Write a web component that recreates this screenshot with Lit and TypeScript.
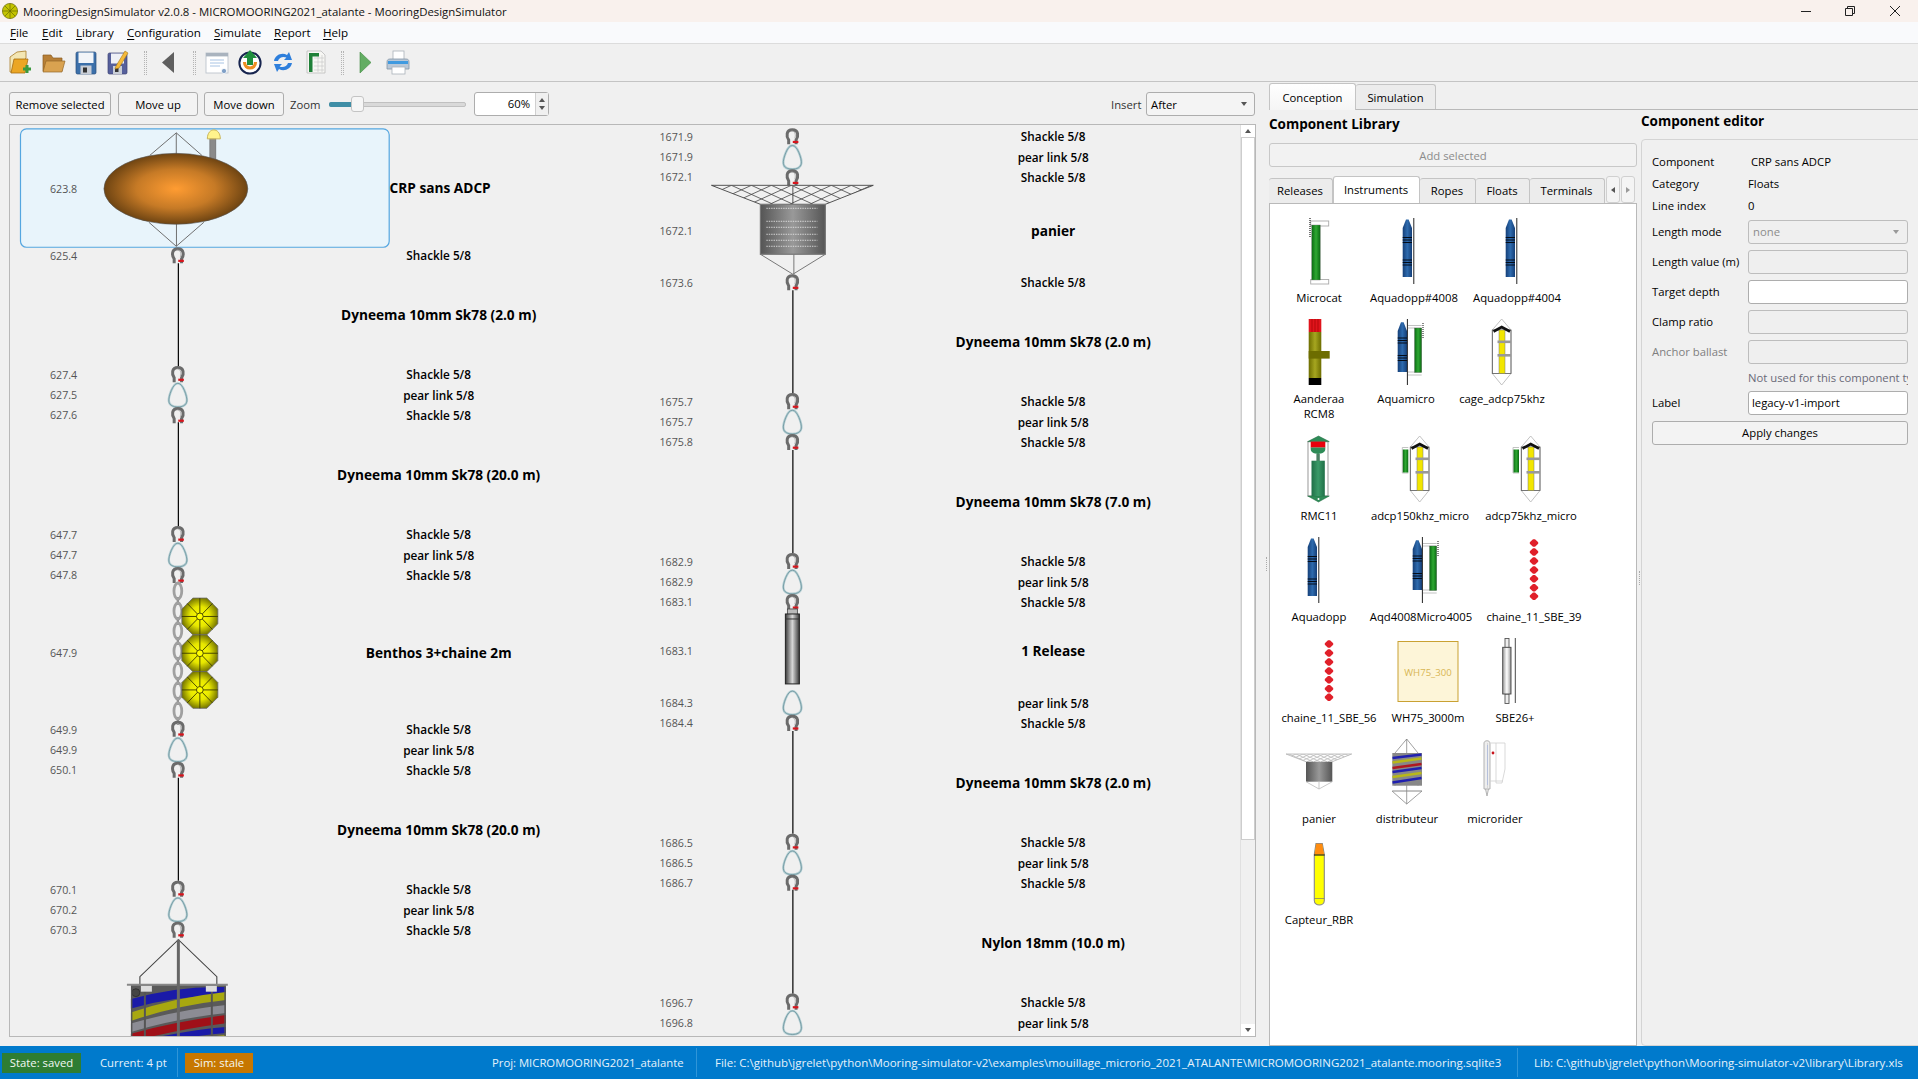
import { LitElement, html, css, svg } from 'lit';
import { customElement } from 'lit/decorators.js';

// --- mooring line parts, drawn around a centre point ---
const shackle = (x: number, y: number) => svg`
  <g transform="translate(${x} ${y})">
    <path d="M-3.7 8V3.6C-6.2 .2-6.4-6.6 0-6.6S6.2 .2 3.7 3.6V8" fill="none" stroke="#6b6b6b" stroke-width="3"/>
    <path d="M-1 -5.4C3-5.4 3.6-1 2.4 2" fill="none" stroke="#9a9a9a" stroke-width=".7"/>
    <path d="M.4 5.6H6" stroke="#d8141c" stroke-width="2.2"/>
  </g>`;

const pear = (x: number, y: number) => svg`
  <g transform="translate(${x} ${y})">
    <path d="M0-11.8C5-12.4 9.6 2 9 6 8.4 10.4 4.4 11.8 0 11.8S-8.6 10.4-9 6C-9.6 2-5-12.4 0-11.8Z" fill="none" stroke="#b4ced3" stroke-width="2.4"/>
    <path d="M0-11.8C5-12.4 9.6 2 9 6 8.4 10.4 4.4 11.8 0 11.8S-8.6 10.4-9 6C-9.6 2-5-12.4 0-11.8Z" fill="none" stroke="#5e8a94" stroke-width=".7"/>
  </g>`;

const float = (cx: number, cy: number) => svg`
  <g transform="translate(${cx} ${cy})">
    <path d="M-7-18.4H7L18-7.4V7.4L7 18.4H-7L-18 7.4V-7.4Z" fill="url(#fl)" stroke="#666" stroke-width=".8"/>
    <path d="M0-18.4V18.4M-18 0H18M-12.6-13-0 0 12.6 13M12.6-13 0 0-12.6 13" stroke="#3c3c00" stroke-width=".9"/>
    <circle r="3.4" fill="#ffff00" stroke="#3c3c00" stroke-width=".9"/>
  </g>`;

const chain = (x: number, y0: number, n: number) => {
  const out = [];
  for (let i = 0; i < n; i++) {
    const y = y0 + i * 20;
    out.push(svg`<rect x=${x - 1.2} y=${y + 6} width="2.4" height="8" fill="#8e8e8e"/>`);
    out.push(svg`<ellipse cx=${x} cy=${y} rx="3.9" ry="8" fill="none" stroke="#a0a0a0" stroke-width="2.8"/>`);
  }
  return out;
};

const rope = (x: number, a: number, b: number) =>
  svg`<line x1=${x + 0.5} x2=${x + 0.5} y1=${a} y2=${b} stroke="#000" stroke-width="1.2"/>`;

const dep = (x: number, y: number, t: string) => svg`<text class="dep" x=${x} y=${y}>${t}</text>`;
const lbl = (x: number, y: number, t: string) => svg`<text class="lbl" x=${x} y=${y}>${t}</text>`;
const big = (x: number, y: number, t: string) => svg`<text class="big" x=${x} y=${y}>${t}</text>`;

// shackle / pear link / shackle stack that joins two segments
const group = (x: number, dx: number, lx: number, s: number, d: string[]) => svg`
  ${shackle(x, s)}${pear(x, s + 21)}${d[2] ? shackle(x, s + 41) : ''}
  ${dep(dx, s + 1, d[0])}${dep(dx, s + 21, d[1])}${d[2] ? dep(dx, s + 41, d[2]) : ''}
  ${lbl(lx, s, 'Shackle 5/8')}${lbl(lx, s + 21, 'pear link 5/8')}${d[2] ? lbl(lx, s + 41, 'Shackle 5/8') : ''}`;

const net = (cid: string, x0: number, x1: number, y0: number, x2: number, x3: number, y1: number, col: string, step: number) => {
  const lines = [];
  const h = y1 - y0;
  for (let x = x0 - 60; x < x1 + 60; x += step) {
    lines.push(svg`<line x1=${x} y1=${y0} x2=${x + h * 2.2} y2=${y1} stroke=${col} stroke-width=".8"/>`);
    lines.push(svg`<line x1=${x} y1=${y0} x2=${x - h * 2.2} y2=${y1} stroke=${col} stroke-width=".8"/>`);
  }
  return svg`
    <clipPath id=${cid}><polygon points="${x0},${y0} ${x1},${y0} ${x3},${y1} ${x2},${y1}"/></clipPath>
    <g clip-path="url(#${cid})">${lines}</g>
    <polyline points="${x2},${y1} ${x0},${y0} ${x1},${y0} ${x3},${y1}" fill="none" stroke=${col} stroke-width=".9"/>`;
};

const Canvas = () => {
  const c1 = 178, d1 = 50, l1 = 439;
  const c2 = 793, d2 = 660, l2 = 1054;
  const dashes = [208, 221, 227, 234, 240, 246];
  return svg`
  <defs>
    <radialGradient id="bu"><stop offset="0" stop-color="#ff9c32"/><stop offset=".55" stop-color="#c67a26"/><stop offset="1" stop-color="#6e4412"/></radialGradient>
    <radialGradient id="fl"><stop offset="0" stop-color="#ffff00"/><stop offset=".55" stop-color="#e6e600"/><stop offset="1" stop-color="#7c7c00"/></radialGradient>
    <linearGradient id="bx"><stop offset="0" stop-color="#555"/><stop offset=".5" stop-color="#999"/><stop offset="1" stop-color="#555"/></linearGradient>
    <linearGradient id="rl"><stop offset="0" stop-color="#3a3a3a"/><stop offset=".5" stop-color="#d8d8d8"/><stop offset="1" stop-color="#3a3a3a"/></linearGradient>
    <linearGradient id="blu"><stop offset="0" stop-color="#153f78"/><stop offset=".5" stop-color="#2e6bae"/><stop offset="1" stop-color="#153f78"/></linearGradient>
    <linearGradient id="grn"><stop offset="0" stop-color="#0a6a12"/><stop offset=".5" stop-color="#2ea832"/><stop offset="1" stop-color="#0a6a12"/></linearGradient>
    <linearGradient id="oli"><stop offset="0" stop-color="#6d6d00"/><stop offset=".5" stop-color="#a6a620"/><stop offset="1" stop-color="#6d6d00"/></linearGradient>
    <linearGradient id="grs"><stop offset="0" stop-color="#999"/><stop offset=".5" stop-color="#fff"/><stop offset="1" stop-color="#999"/></linearGradient>
    <linearGradient id="sea"><stop offset="0" stop-color="#1f6f47"/><stop offset=".5" stop-color="#3a9a68"/><stop offset="1" stop-color="#1f6f47"/></linearGradient>
    <clipPath id="dc"><rect x="131" y="985" width="95" height="52"/></clipPath>
  </defs>

  <!-- buoy, selected -->
  <rect x="20.5" y="128.5" width="369" height="118.5" rx="6" fill="#e8f4fb" stroke="#54a6e0" stroke-width="1.2"/>
  <path d="M150 155 176.4 132.5 202 155M176.4 132.5V155M149 222 176.4 246 204 222M176.6 222V246" fill="none" stroke="#6f6f6f" stroke-width="1"/>
  <rect x="210" y="138" width="6" height="22" fill="#8a8a8a" stroke="#666" stroke-width=".6"/>
  <path d="M207.5 138.5C207.5 126.5 220.5 126.5 220.5 138.5Z" fill="#fff38c" stroke="#c8b45a" stroke-width="1"/>
  <ellipse cx="176" cy="188.5" rx="72" ry="35.5" fill="url(#bu)" stroke="#555" stroke-width=".6"/>
  ${dep(d1, 189, '623.8')}
  <text class="big" x="440.5" y="187">CRP sans ADCP</text>

  ${shackle(c1, 255)}${dep(d1, 256, '625.4')}${lbl(l1, 255, 'Shackle 5/8')}
  ${rope(c1, 263, 366)}
  ${big(l1, 314, 'Dyneema 10mm Sk78 (2.0 m)')}
  ${group(c1, d1, l1, 374, ['627.4', '627.5', '627.6'])}
  ${rope(c1, 422, 526)}
  ${big(l1, 474, 'Dyneema 10mm Sk78 (20.0 m)')}
  ${group(c1, d1, l1, 534, ['647.7', '647.7', '647.8'])}

  ${chain(c1, 591, 7)}
  ${float(200, 616.5)}${float(200, 653.3)}${float(200, 690)}
  ${dep(d1, 653, '647.9')}
  ${big(l1, 653, 'Benthos 3+chaine 2m')}

  ${group(c1, d1, l1, 729, ['649.9', '649.9', '650.1'])}
  ${rope(c1, 778, 881)}
  ${big(l1, 830, 'Dyneema 10mm Sk78 (20.0 m)')}
  ${group(c1, d1, l1, 889, ['670.1', '670.2', '670.3'])}

  <!-- distributeur, cut by the canvas edge -->
  <path d="M140 985V977L178.5 940 217 977V985" fill="none" stroke="#444" stroke-width="1.1"/>
  <g clip-path="url(#dc)">
    <rect x="131" y="985" width="95" height="52" fill="#5a5a5a"/>
    <path d="M128 1005Q178 990 230 992" fill="none" stroke="#1a1aa8" stroke-width="9"/>
    <path d="M128 1018Q178 1001 230 996" fill="none" stroke="#a8a810" stroke-width="8"/>
    <path d="M128 1029Q178 1014 230 1009" fill="none" stroke="#8c8c94" stroke-width="8"/>
    <path d="M128 1039Q178 1025 230 1019" fill="none" stroke="#a01018" stroke-width="8"/>
    <path d="M160 1040Q200 1032 230 1030" fill="none" stroke="#1a1aa8" stroke-width="6"/>
    <path d="M200 1040 230 1037" fill="none" stroke="#a8a810" stroke-width="4"/>
    <circle cx="136" cy="993" r="4" fill="#444" stroke="#222" stroke-width=".6"/>
    <path d="M145 990V1037M212 990V1037M131.5 985V1037M225.5 985V1037" stroke="#555" stroke-width="2"/>
    <rect x="141" y="986" width="11" height="6" fill="#ddd"/>
    <rect x="206" y="986" width="11" height="6" fill="#ddd"/>
  </g>
  <line x1="127" x2="228" y1="985" y2="985" stroke="#888" stroke-width="2"/>
  <line x1="178.5" x2="178.5" y1="940" y2="1037" stroke="#666" stroke-width="3"/>

  <!-- second column -->
  ${group(c2, d2, l2, 136, ['1671.9', '1671.9', '1672.1'])}
  ${net('bn', 712, 874, 185, 761, 826, 204, '#444', 20)}
  <line x1="793.5" x2="793.5" y1="186" y2="204" stroke="#444" stroke-width=".9"/>
  <rect x="761" y="204" width="65" height="50" fill="url(#bx)" stroke="#777" stroke-width="1.2"/>
  ${dashes.map((y) => svg`<line x1="767" x2="818" y1=${y} y2=${y} stroke="#eee" stroke-width=".8" stroke-dasharray="1.4 1"/>`)}
  <path d="M761 254 793.5 274 826 254M794.5 254V274" fill="none" stroke="#777" stroke-width="1"/>
  ${dep(d2, 231, '1672.1')}${big(l2, 230, 'panier')}
  ${shackle(c2, 282)}${dep(d2, 283, '1673.6')}${lbl(l2, 282, 'Shackle 5/8')}
  ${rope(c2, 290, 393)}
  ${big(l2, 341, 'Dyneema 10mm Sk78 (2.0 m)')}
  ${group(c2, d2, l2, 401, ['1675.7', '1675.7', '1675.8'])}
  ${rope(c2, 450, 553)}
  ${big(l2, 501, 'Dyneema 10mm Sk78 (7.0 m)')}
  ${group(c2, d2, l2, 561, ['1682.9', '1682.9', '1683.1'])}

  <rect x="788" y="609" width="10" height="6" fill="#bbb" stroke="#444" stroke-width=".8"/>
  <rect x="786" y="614" width="14" height="70" fill="url(#rl)" stroke="#222" stroke-width="1"/>
  <line x1="786" x2="800" y1="619" y2="619" stroke="#333" stroke-width="1"/>
  ${dep(d2, 651, '1683.1')}${big(l2, 651, '1 Release')}

  ${pear(c2, 703)}${dep(d2, 703, '1684.3')}${lbl(l2, 703, 'pear link 5/8')}
  ${shackle(c2, 723)}${dep(d2, 723, '1684.4')}${lbl(l2, 723, 'Shackle 5/8')}
  ${rope(c2, 731, 834)}
  ${big(l2, 783, 'Dyneema 10mm Sk78 (2.0 m)')}
  ${group(c2, d2, l2, 842, ['1686.5', '1686.5', '1686.7'])}
  ${rope(c2, 890, 994)}
  ${big(l2, 943, 'Nylon 18mm (10.0 m)')}
  ${group(c2, d2, l2, 1002, ['1696.7', '1696.8', ''])}
  `;
};

// --- library thumbnails, viewBox 80x66 with the label centre at x=40 ---
const aquadopp = (dx = 0) => svg`
  <g transform="translate(${dx} 0)">
    <path d="M28.7 10 32 1.5H34.6L38 10V59H28.7Z" fill="url(#blu)"/>
    <path d="M28.7 19.5H38M28.7 22H38M28.7 24.5H38M28.7 42H38M28.7 44.5H38M28.7 47H38" stroke="#050d18" stroke-width="1.1"/>
    <line x1="39.8" x2="39.8" y1="0" y2="66" stroke="#222" stroke-width="1"/>
  </g>`;

const aquamicro = (dx = 0) => svg`
  <g transform="translate(${dx} 0)">
    <path d="M31.7 12 35 3.2H37.6L41 12V53H31.7Z" fill="url(#blu)"/>
    <path d="M31.7 19H41M31.7 21.5H41M31.7 24H41M31.7 36.5H41M31.7 39H41M31.7 41.5H41" stroke="#050d18" stroke-width="1.1"/>
    <line x1="41.4" x2="41.4" y1="0" y2="66" stroke="#222" stroke-width="1"/>
    <path d="M42 6.5H55.7M42 9H55.7M42 53H55.7M42 56H55.7" stroke="#bbb" stroke-width=".9"/>
    <rect x="48.5" y="9" width="7.2" height="44.5" fill="url(#grn)" stroke="#555" stroke-width=".3"/>
    <line x1="57" x2="57" y1="4" y2="19" stroke="#555" stroke-width="1.4" stroke-dasharray="1 1"/>
  </g>`;

const cage = (green?: number) => svg`
  <path d="M39.7 0 49 11V54.5L39.7 66 30.3 54.5V11Z" fill="#fff" stroke="#bbb" stroke-width=".9"/>
  <rect x="30.3" y="11" width="18.7" height="43.5" fill="none" stroke="#555" stroke-width=".8"/>
  <rect x="37" y="11" width="6" height="43.5" fill="#f2e600" stroke="#777" stroke-width=".5"/>
  <rect x="35.5" y="21.5" width="13.5" height="2.6" fill="#999"/>
  <rect x="35.5" y="35" width="13.5" height="2.6" fill="#999"/>
  <path d="M31.5 12.5 39.7 8 48 12.5" fill="none" stroke="#111" stroke-width="2.6"/>
  ${green !== undefined ? svg`
    <path d="M${green + 6} 11.5H${green}V37H${green + 6}" fill="none" stroke="#bbb" stroke-width=".9"/>
    <rect x=${green + .5} y="13.5" width="5.5" height="23" fill="url(#grn)"/>` : ''}`;

const redChain = () => svg`${[6, 15, 24, 33, 41.7, 50.7, 59.3].map((y) => svg`
  <path transform="translate(40 ${y})" d="M-1-3.8H1L4.2-.8V.8L1 3.8H-1L-4.2 .8V-.8Z" fill="#e0202a"/>`)}`;

const ICONS: Record<string, () => unknown> = {
  microcat: () => svg`
    <rect x="31.7" y="3" width="18" height="5" fill="#fff" stroke="#aaa" stroke-width=".9"/>
    <rect x="31.7" y="61.5" width="18" height="4.5" fill="#fff" stroke="#aaa" stroke-width=".9"/>
    <rect x="32.7" y="7" width="8.6" height="55" fill="url(#grn)" stroke="#777" stroke-width=".4"/>
    <line x1="31" x2="31" y1="0" y2="20" stroke="#555" stroke-width="1.6" stroke-dasharray="1 1"/>`,
  aquadopp: () => aquadopp(),
  rcm8: () => svg`
    <rect x="29.7" y="0" width="12.6" height="13" fill="#e0141c"/>
    <path d="M33 0V13M36 0V13M39 0V13" stroke="#900" stroke-width=".6"/>
    <rect x="29.7" y="13" width="12.6" height="46" fill="url(#oli)"/>
    <rect x="29.7" y="32" width="21" height="7.6" fill="#6d6d00"/>
    <rect x="29.7" y="59" width="12.6" height="7" fill="#000"/>`,
  aquamicro: () => aquamicro(),
  cage: () => cage(),
  rmc11: () => svg`
    <rect x="29" y="5.6" width="20" height="54.4" fill="#fff" stroke="#aaa" stroke-width="1.2"/>
    <path d="M28.7 5.6 39.5 0 50.3 5.6ZM28.7 60H50.3L39.5 66Z" fill="#2e8b57" stroke="#1f6b3f" stroke-width=".5"/>
    <circle cx="39.5" cy="63" r="1" fill="#fff"/>
    <rect x="31.7" y="5.6" width="14.6" height="6" fill="#e8000c"/>
    <path d="M31.7 11.6H46.3V13C46.3 19.5 31.7 19.5 31.7 13Z" fill="#2e8b57"/>
    <rect x="37.4" y="18" width="3.4" height="7" fill="#4b7f63"/>
    <rect x="32.5" y="24.7" width="13.3" height="35.3" fill="url(#sea)"/>`,
  a150: () => cage(22.3),
  a75: () => cage(22),
  chaine: () => redChain(),
  wh75: () => svg`
    <rect x="10" y="3.5" width="60" height="60" fill="#fdf5d8" stroke="#c9a132" stroke-width="1"/>
    <text class="wh" x="40" y="34">WH75_300</text>`,
  sbe: () => svg`
    <rect x="30" y=".5" width="4" height="9" fill="#eee" stroke="#555" stroke-width=".9"/>
    <rect x="30" y="56" width="4" height="9.5" fill="#eee" stroke="#555" stroke-width=".9"/>
    <rect x="27.7" y="9.3" width="8.3" height="46.7" fill="url(#grs)" stroke="#444" stroke-width=".9"/>
    <line x1="40.3" x2="40.3" y1="0" y2="65" stroke="#333" stroke-width=".9"/>`,
  panier: () => svg`
    ${net('sn', 7, 72.7, 15, 27, 53.3, 22.7, '#bbb', 7)}
    <rect x="27" y="22.7" width="26.3" height="20" fill="url(#bx)"/>
    <path d="M27 42.7 40 50 53.3 42.7M40 42.7V50" fill="none" stroke="#bbb" stroke-width=".8"/>`,
  dist: () => svg`
    <path d="M39.7 0 28 14V46.7M39.7 0 51 14V46.7M39.7 0V65M25 52 39.7 65 55 52" fill="none" stroke="#777" stroke-width=".7"/>
    <rect x="25.3" y="14" width="29.7" height="32.7" fill="#888"/>
    <path d="M25.5 19 54.5 15.5" stroke="#2020b0" stroke-width="2.4"/>
    <path d="M25.5 23.5 54.5 19.5" stroke="#b8b818" stroke-width="2.4"/>
    <path d="M25.5 29 54.5 25" stroke="#b01820" stroke-width="2.4"/>
    <path d="M25.5 33 54.5 29" stroke="#2020b0" stroke-width="2.4"/>
    <path d="M25.5 38 54.5 34" stroke="#b8b818" stroke-width="2.4"/>
    <path d="M25.5 43.5 54.5 39" stroke="#2020b0" stroke-width="2.4"/>
    <path d="M25.3 52H55" stroke="#888" stroke-width="1"/>`,
  micro: () => svg`
    <path d="M29 4C29 1 35 1 35 4V50H29ZM30.5 50 32 57 33.5 50" fill="#eee" stroke="#aaa" stroke-width=".9"/>
    <path d="M36 4H50V30L47 44H41V4M35 42H48M32.5 4V50" fill="none" stroke="#cfcfcf" stroke-width=".8"/>
    <line x1="32.5" x2="32.5" y1="6" y2="46" stroke="#a5b5dc" stroke-width=".7"/>
    <circle cx="38" cy="14" r="1.4" fill="#c8141c"/>`,
  rbr: () => svg`
    <g transform="translate(0 2.5)">
      <path d="M35.3 12 37 1H43.3L45.3 12V58C45.3 64 35.3 64 35.3 58Z" fill="#ffff00" stroke="#888" stroke-width="1.1"/>
      <path d="M35.6 12 37.2 1.2H43.2L45 12Z" fill="#ff8c10"/>
      <line x1="35" x2="45.6" y1="12.5" y2="12.5" stroke="#222" stroke-width="1.2"/>
      <line x1="35.4" x2="45.2" y1="56" y2="56" stroke="#777" stroke-width=".7"/>
    </g>`,
};

const LIBRARY: { name: string; icon: string; w: number }[][] = [
  [{ name: 'Microcat', icon: 'microcat', w: 80 }, { name: 'Aquadopp#4008', icon: 'aquadopp', w: 110 }, { name: 'Aquadopp#4004', icon: 'aquadopp', w: 96 }],
  [{ name: 'Aanderaa\nRCM8', icon: 'rcm8', w: 80 }, { name: 'Aquamicro', icon: 'aquamicro', w: 94 }, { name: 'cage_adcp75khz', icon: 'cage', w: 98 }],
  [{ name: 'RMC11', icon: 'rmc11', w: 80 }, { name: 'adcp150khz_micro', icon: 'a150', w: 122 }, { name: 'adcp75khz_micro', icon: 'a75', w: 100 }],
  [{ name: 'Aquadopp', icon: 'aquadopp', w: 80 }, { name: 'Aqd4008Micro4005', icon: 'aquamicro', w: 124 }, { name: 'chaine_11_SBE_39', icon: 'chaine', w: 102 }],
  [{ name: 'chaine_11_SBE_56', icon: 'chaine', w: 100 }, { name: 'WH75_3000m', icon: 'wh75', w: 98 }, { name: 'SBE26+', icon: 'sbe', w: 76 }],
  [{ name: 'panier', icon: 'panier', w: 80 }, { name: 'distributeur', icon: 'dist', w: 96 }, { name: 'microrider', icon: 'micro', w: 80 }],
  [{ name: 'Capteur_RBR', icon: 'rbr', w: 80 }],
];

// --- toolbar icons, 24x24 ---
const T = {
  fresh: svg`
    <path d="M1 22V7L8 2 17 1V8L5 22Z" fill="#f3e6b4" stroke="#a87c28" stroke-width=".8"/>
    <path d="M2 23 5 9H19L16 23Z" fill="#eba624" stroke="#a56c12" stroke-width=".8"/>
    <path d="M14 19H22M18 15V23" stroke="#3a9a3e" stroke-width="3"/>`,
  open: svg`
    <path d="M1 21V5H9L11 8H20V21Z" fill="#b77f36" stroke="#8a5c20" stroke-width=".7"/>
    <path d="M1 22 4 11H23L20 22Z" fill="#d9a250" stroke="#93672a" stroke-width=".7"/>`,
  save: svg`
    <rect x="1" y="2" width="20" height="22" rx="1.5" fill="#3c70aa" stroke="#2a4f7c" stroke-width=".7"/>
    <rect x="3.5" y="2.5" width="15" height="10.5" fill="#f2f5f9"/>
    <rect x="5.5" y="15.5" width="11" height="8.5" fill="#c9ced6"/>
    <rect x="8" y="17.5" width="4" height="5" fill="#333"/>`,
  saveas: svg`
    <rect x="0" y="3" width="19" height="21" rx="1.5" fill="#56609c" stroke="#3c4472" stroke-width=".7"/>
    <rect x="3" y="3.5" width="13" height="10" fill="#eef0f6"/>
    <rect x="5" y="16" width="9" height="8" fill="#c9ced6"/>
    <rect x="7" y="18" width="3.5" height="4" fill="#333"/>
    <path d="M8 16 17 1 20 3 11 18 7 19Z" fill="#f5b93a" stroke="#a87a18" stroke-width=".6"/>`,
  back: svg`<polygon points="18,2 18,23 6,12.5" fill="#5f5f5f"/>`,
  win: svg`
    <rect x="1" y="3" width="22" height="20" fill="#fff" stroke="#bcc4cc" stroke-width=".9"/>
    <rect x="1" y="3" width="22" height="3.4" fill="#a9b3be"/>
    <path d="M5 10H19M5 13H19M5 16H15" stroke="#a8c4e4" stroke-width="1"/>
    <circle cx="19" cy="21" r="2.6" fill="#7f9fc6" stroke="#fff" stroke-width=".8"/>`,
  up: svg`
    <circle cx="12" cy="13" r="10.6" fill="#fff" stroke="#17254f" stroke-width="2"/>
    <path d="M6.5 12C6.5 20 17.5 20 17.5 12" fill="none" stroke="#ee8d22" stroke-width="3.2"/>
    <path d="M12 0 19 8H15V15H9V8H5Z" fill="#1e8e3e"/>`,
  sync: svg`
    <path d="M3 11C4 5 11 2 16 5L18 2 21 10 13 10 15.4 7.6C12 6 8 7.6 7 11Z" fill="#2e7fdc"/>
    <path d="M21 13C20 19 13 22 8 19L6 22 3 14 11 14 8.6 16.4C12 18 16 16.4 17 13Z" fill="#2e7fdc"/>`,
  sheet: svg`
    <path d="M3 1H17L21 5V23H3Z" fill="#f7f7f4" stroke="#bbb" stroke-width=".8"/>
    <path d="M10 8H20M10 12H20M10 16H20M10 20H20M14 5V22M18 5V22" stroke="#c8c8c8" stroke-width=".7"/>
    <path d="M5 22V3H15V6.5H8.5V22Z" fill="#1f8038"/>`,
  play: svg`<polygon points="7,2 18,12.5 7,23" fill="#63ad63" stroke="#3f8a3f" stroke-width=".6"/>`,
  print: svg`
    <rect x="7" y="1" width="11" height="9" fill="#fff" stroke="#aab2ba" stroke-width=".8"/>
    <path d="M1 12C1 10 2 9 4 9H20C22 9 23 10 23 12V19H1Z" fill="#b9c8d8" stroke="#8494a6" stroke-width=".8"/>
    <rect x="2" y="11" width="20" height="3" fill="#3f9ae0"/>
    <rect x="6" y="17" width="13" height="7" fill="#fff" stroke="#aab2ba" stroke-width=".8"/>`,
};

@customElement('app-root')
export class AppRoot extends LitElement {
  static styles = css`
    :host {
      display: block;
      width: 1918px;
      height: 1079px;
      background: #f0f0f0;
      color: #000;
      font: 11.3px 'Open Sans', sans-serif;
      overflow: hidden;
    }
    * { box-sizing: border-box; }
    .app { display: flex; flex-direction: column; height: 1079px; }

    .title { height: 22px; background: #f9f1ed; display: flex; align-items: center; font-size: 11.4px; color: #111; }
    .title .logo { width: 16px; height: 16px; margin: 0 5px 0 2px; }
    .title .wc { margin-left: auto; display: flex; gap: 30px; padding-right: 16px; }
    .title .wc svg { width: 14px; height: 14px; display: block; }
    .title .wc svg:last-child { margin-left: 1px; }

    .menu { height: 22px; background: #f9fafc; border-bottom: 1px solid #dcdcdc; display: flex; padding-left: 10px; align-items: center; font-size: 11.6px; }
    .menu span { display: block; }
    .menu u { text-underline-offset: 2px; }

    .tools { height: 38px; border-bottom: 1px solid #c4c4c4; display: flex; gap: 9px; align-items: center; padding: 0 0 0 9px; }
    .tools svg { width: 24px; height: 25px; display: block; overflow: visible; }
    .tools .sep { width: 3px; height: 24px; border-left: 1px dotted #b4b4b4; border-right: 1px dotted #b4b4b4; }
    .tools .sep.m4 { margin-left: 4px; }
    .tools .sep.m3 { margin-left: 3px; }

    .main { flex: 1; display: flex; min-height: 0; }
    .left { width: 1264px; padding: 10px 8px 9px 9px; display: flex; flex-direction: column; gap: 8px; }
    .ctrl { height: 24px; display: flex; align-items: center; }
    .btn {
      height: 24px; display: flex; align-items: center; justify-content: center;
      background: #f3f3f3; border: 1px solid #adadad; border-radius: 3px;
    }
    .b1 { width: 102px; }
    .b2 { width: 80px; margin-left: 7px; }
    .b3 { width: 80px; margin-left: 6px; }
    .zl { margin-left: 6px; width: 33px; color: #333; }
    .slider { width: 137px; height: 16px; margin-left: 6px; position: relative; }
    .slider .gr { position: absolute; left: 0; right: 0; top: 6px; height: 5px; border-radius: 2px; background: #d9d9d9; border: 1px solid #c0c0c0; }
    .slider .fill { position: absolute; left: 0; width: 24px; top: 6px; height: 5px; border-radius: 2px; background: #3f8ea6; }
    .slider .hd { position: absolute; left: 22px; top: 0; width: 13px; height: 16px; border-radius: 3px; background: #f6f6f6; border: 1px solid #c4c4c4; }
    .spin { width: 75px; height: 24px; margin-left: 8px; display: flex; background: #fff; border: 1px solid #adadad; border-radius: 3px; }
    .spin .v { flex: 1; text-align: right; padding-right: 5px; line-height: 22px; }
    .spin .ar { width: 13px; background: #f0f0f0; border-left: 1px solid #d0d0d0; display: flex; flex-direction: column; align-items: center; justify-content: center; gap: 4px; }
    .up, .dn { width: 0; height: 0; border-left: 3.5px solid transparent; border-right: 3.5px solid transparent; }
    .up { border-bottom: 4px solid #555; }
    .dn { border-top: 4px solid #555; }
    .ins { margin-left: auto; width: 35px; color: #333; }
    .combo { width: 109px; height: 24px; margin-right: 1px; padding: 0 7px 0 4px; display: flex; align-items: center; justify-content: space-between; background: #f4f4f4; border: 1px solid #adadad; border-radius: 3px; }

    .canvas { width: 1247px; height: 913px; border: 1px solid #b8b8b8; display: flex; background: #f0f0f0; }
    .canvas > svg { width: 1231px; height: 911px; display: block; }
    .canvas text { dominant-baseline: central; fill: #000; }
    .canvas .dep { font: 10.7px 'Open Sans', sans-serif; fill: #555; }
    .canvas .lbl { font: 600 11.8px 'Open Sans', sans-serif; text-anchor: middle; }
    .canvas .big { font: 700 13.7px 'Open Sans', sans-serif; text-anchor: middle; }
    .vbar { width: 15px; display: flex; flex-direction: column; background: #f0f0f0; border-left: 1px solid #e0e0e0; }
    .vbar .cap { height: 12px; background: #fff; display: flex; align-items: center; justify-content: center; }
    .vbar .thumb { height: 703px; background: #fff; border: 1px solid #cdcdcd; }
    .vbar .rest { flex: 1; }

    .split { width: 5px; display: flex; align-items: center; justify-content: center; }
    .grip { height: 14px; border-left: 1px dotted #aaa; }

    .right { flex: 1; min-width: 0; display: flex; flex-direction: column; }
    .tabs { height: 28px; padding-top: 1px; display: flex; align-items: flex-end; border-bottom: 1px solid #b9b9b9; }
    .tab { height: 25px; display: flex; align-items: center; justify-content: center; background: #ececec; border: 1px solid #c4c4c4; border-bottom: none; border-left: none; border-radius: 3px 3px 0 0; }
    .tab.on { height: 27px; background: linear-gradient(#fff, #f5f5f5); border-left: 1px solid #c4c4c4; margin-bottom: -1px; }
    .body { flex: 1; display: flex; min-height: 0; }

    .lib { width: 368px; padding-top: 6px; display: flex; flex-direction: column; }
    .h { font-weight: 700; font-size: 13.5px; line-height: 16px; }
    .add { margin-top: 11px; color: #8c8c8c; background: #f2f2f2; border-color: #c8c8c8; flex: none; }
    .subs { height: 28px; margin-top: 8px; display: flex; align-items: flex-end; flex: none; }
    .subs .tab { height: 25px; padding: 0 1px 2px 0; }
    .subs .tab.on { height: 27px; background: #fff; margin-bottom: 0; }
    .subs .sc { margin-left: 1px; height: 27px; width: 14px; display: flex; align-items: center; justify-content: center; background: #f4f4f4; border: 1px solid #d0d0d0; border-radius: 3px; }
    .l { width: 0; height: 0; border-top: 3.5px solid transparent; border-bottom: 3.5px solid transparent; border-right: 4px solid #555; }
    .r { width: 0; height: 0; border-top: 3.5px solid transparent; border-bottom: 3.5px solid transparent; border-left: 4px solid #999; }
    .list { flex: 1; background: #fff; border: 1px solid #b9b9b9; padding: 14px 0 0 9px; display: flex; flex-direction: column; gap: 13.9px; overflow: hidden; }
    .row { display: flex; }
    .row.two { padding-bottom: 1.5px; }
    .item { display: flex; flex-direction: column; align-items: center; flex: none; }
    .item svg { width: 80px; height: 66px; display: block; overflow: visible; }
    .item .wh { font: 9.6px 'Open Sans', sans-serif; fill: #d8b654; text-anchor: middle; dominant-baseline: central; }
    .nm { margin-top: 6px; line-height: 15px; text-align: center; white-space: pre-line; }

    .ed { flex: 1; min-width: 0; padding: 3px 0 0 0; display: flex; flex-direction: column; overflow: hidden; }
    .ed .h { margin-bottom: 10px; }
    .group { flex: 1; width: 300px; border: 1px solid #d4d4d4; border-radius: 4px; padding: 14px 0 0 10px; }
    .form { width: 256px; display: grid; grid-template-columns: 96px 160px; row-gap: 6px; grid-auto-rows: min-content; align-items: center; }
    .form > div { line-height: 16px; white-space: nowrap; }
    .form .val1 { padding-left: 3px; }
    .field { height: 24px; border: 1px solid #bdbdbd; border-radius: 3px; background: #efefef; display: flex; align-items: center; padding: 0 3px; }
    .field.w { background: #fff; border-color: #adadad; }
    .field.sel { padding: 0 8px 0 4px; justify-content: space-between; color: #8c8c8c; }
    .dn.lt { border-top-color: #999; }
    .off { color: #7f7f7f; }
    .hint { grid-column: 2; overflow: hidden; color: #6a6a78; line-height: 15px !important; }
    .apply { grid-column: 1 / 3; }

    .status { height: 33px; background: #007acc; color: #e6f2fb; display: flex; align-items: center; white-space: nowrap; font-size: 11.3px; }
    .pill { height: 20px; display: flex; align-items: center; justify-content: center; color: #f4f8f4; }
    .pill.g { width: 79px; margin-left: 2px; background: #2e7d32; }
    .pill.o { width: 68px; margin-left: 7px; background: #c77700; }
    .vs { width: 1px; height: 29px; background: #2f95d8; }
    .st { display: block; }
    .st.path { font-size: 11.5px; }
  `;

  render() {
    return html`
      <div class="app">
        <div class="title">
          <svg class="logo" viewBox="0 0 16 16">
            <circle cx="8" cy="8" r="7.6" fill="#c4c400" stroke="#6a6a00" stroke-width=".7"/>
            <path d="M8 .6V15.4M.6 8H15.4M2.8 2.8 13.2 13.2M13.2 2.8 2.8 13.2" stroke="#6a6a00" stroke-width=".7"/>
          </svg>
          <span>MooringDesignSimulator v2.0.8 - MICROMOORING2021_atalante - MooringDesignSimulator</span>
          <div class="wc">
            <svg viewBox="0 0 14 14"><path d="M2 7.5H12" stroke="#222" stroke-width="1"/></svg>
            <svg viewBox="0 0 14 14"><path d="M2.5 4.5H9.5V11.5H2.5ZM4.5 4.5V2.5H11.5V9.5H9.5" fill="none" stroke="#222" stroke-width="1"/></svg>
            <svg viewBox="0 0 14 14"><path d="M2 2 12 12M12 2 2 12" stroke="#222" stroke-width="1"/></svg>
          </div>
        </div>

        <div class="menu">
          ${[['File', 32], ['Edit', 34], ['Library', 51], ['Configuration', 87], ['Simulate', 60], ['Report', 49], ['Help', 30]].map(
            ([m, w]) => html`<span style="width:${w}px"><u>${(m as string)[0]}</u>${(m as string).slice(1)}</span>`
          )}
        </div>

        <div class="tools">
          <svg viewBox="0 0 24 25">${T.fresh}</svg>
          <svg viewBox="0 0 24 25">${T.open}</svg>
          <svg viewBox="0 0 24 25">${T.save}</svg>
          <svg viewBox="0 0 24 25">${T.saveas}</svg>
          <div class="sep m3"></div>
          <svg viewBox="0 0 24 25">${T.back}</svg>
          <div class="sep m4"></div>
          <svg viewBox="0 0 24 25">${T.win}</svg>
          <svg viewBox="0 0 24 25">${T.up}</svg>
          <svg viewBox="0 0 24 25">${T.sync}</svg>
          <svg viewBox="0 0 24 25">${T.sheet}</svg>
          <div class="sep m4"></div>
          <svg viewBox="0 0 24 25">${T.play}</svg>
          <svg viewBox="0 0 24 25">${T.print}</svg>
        </div>

        <div class="main">
          <div class="left">
            <div class="ctrl">
              <div class="btn b1">Remove selected</div>
              <div class="btn b2">Move up</div>
              <div class="btn b3">Move down</div>
              <div class="zl">Zoom</div>
              <div class="slider"><div class="gr"></div><div class="fill"></div><div class="hd"></div></div>
              <div class="spin">
                <div class="v">60%</div>
                <div class="ar"><div class="up"></div><div class="dn"></div></div>
              </div>
              <div class="ins">Insert</div>
              <div class="combo"><span>After</span><div class="dn"></div></div>
            </div>
            <div class="canvas">
              <svg viewBox="10 125 1231 911">${Canvas()}</svg>
              <div class="vbar">
                <div class="cap"><div class="up"></div></div>
                <div class="thumb"></div>
                <div class="rest"></div>
                <div class="cap"><div class="dn"></div></div>
              </div>
            </div>
          </div>

          <div class="split"><div class="grip"></div></div>

          <div class="right">
            <div class="tabs">
              <div class="tab on" style="width:87px">Conception</div>
              <div class="tab" style="width:80px">Simulation</div>
            </div>
            <div class="body">
              <div class="lib">
                <div class="h">Component Library</div>
                <div class="btn add">Add selected</div>
                <div class="subs">
                  <div class="tab" style="width:64px">Releases</div>
                  <div class="tab on" style="width:87px">Instruments</div>
                  <div class="tab" style="width:56px">Ropes</div>
                  <div class="tab" style="width:54px">Floats</div>
                  <div class="tab" style="width:75px">Terminals</div>
                  <div class="sc"><div class="l"></div></div>
                  <div class="sc"><div class="r"></div></div>
                </div>
                <div class="list">
                  ${LIBRARY.map((row, i) => html`
                    <div class="row ${i === 1 ? 'two' : ''}">
                      ${row.map((it) => html`
                        <div class="item" style="width:${it.w}px">
                          <svg viewBox="0 0 80 66">${ICONS[it.icon]()}</svg>
                          <div class="nm">${it.name}</div>
                        </div>`)}
                    </div>`)}
                </div>
              </div>

              <div class="split" style="width:4px"><div class="grip"></div></div>

              <div class="ed">
                <div class="h">Component editor</div>
                <div class="group">
                  <div class="form">
                    <div>Component</div><div class="val1">CRP sans ADCP</div>
                    <div>Category</div><div>Floats</div>
                    <div>Line index</div><div>0</div>
                    <div>Length mode</div><div class="field sel"><span>none</span><div class="dn lt"></div></div>
                    <div>Length value (m)</div><div class="field"></div>
                    <div>Target depth</div><div class="field w"></div>
                    <div>Clamp ratio</div><div class="field"></div>
                    <div class="off">Anchor ballast</div><div class="field"></div>
                    <div class="hint">Not used for this component type</div>
                    <div>Label</div><div class="field w">legacy-v1-import</div>
                    <div class="btn apply">Apply changes</div>
                  </div>
                </div>
              </div>
            </div>
          </div>
        </div>

        <div class="status">
          <div class="pill g">State: saved</div>
          <span class="st" style="margin-left:19px;width:77px">Current: 4 pt</span>
          <div class="vs"></div>
          <div class="pill o">Sim: stale</div>
          <span class="st" style="margin-left:239px;width:204px">Proj: MICROMOORING2021_atalante</span>
          <div class="vs"></div>
          <span class="st path" style="margin-left:18px;width:802px">File: C:\\github\\jgrelet\\python\\Mooring-simulator-v2\\examples\\mouillage_microrio_2021_ATALANTE\\MICROMOORING2021_atalante.mooring.sqlite3</span>
          <div class="vs"></div>
          <span class="st path" style="margin-left:16px">Lib: C:\\github\\jgrelet\\python\\Mooring-simulator-v2\\library\\Library.xls</span>
        </div>
      </div>
    `;
  }
}
